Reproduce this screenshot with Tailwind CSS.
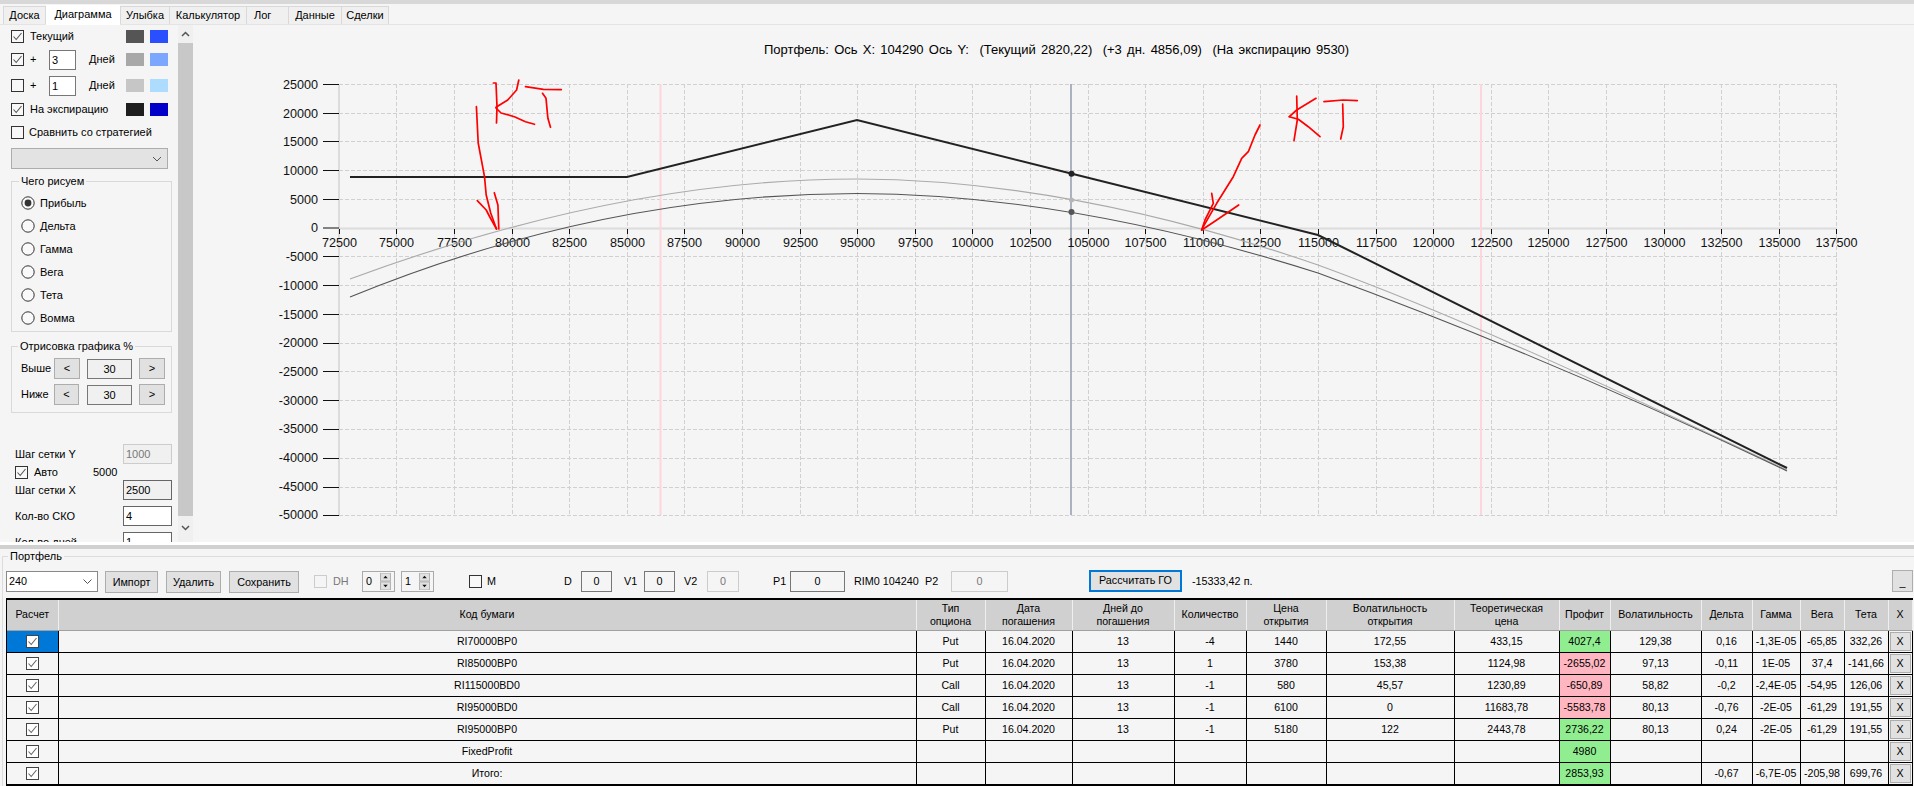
<!DOCTYPE html>
<html lang="ru"><head><meta charset="utf-8"><script src="https://cdn.jsdelivr.net/npm/@tailwindcss/browser@4"></script><title>Диаграмма</title></head>
<body class="m-0">
<svg class="hidden"><symbol id="on" viewBox="0 0 13 13"><rect x=".5" y=".5" width="12" height="12" fill="#fff" fill-opacity=".35" stroke="#333"/><path d="M2.5 6.5 5.2 9.5 10.5 3" fill="none" stroke="#555" stroke-width="1.1"/></symbol><symbol id="off" viewBox="0 0 13 13"><rect x=".5" y=".5" width="12" height="12" fill="#fff" fill-opacity=".35" stroke="#333"/></symbol><symbol id="cell" viewBox="0 0 13 13"><rect x=".5" y=".5" width="12" height="12" fill="#fff" stroke="#444"/><path d="M2.5 6.5 5.2 9.5 10.5 3" fill="none" stroke="#666" stroke-width="1.1"/></symbol><symbol id="rad" viewBox="0 0 14 14"><circle cx="7" cy="7" r="6.2" fill="#fff" fill-opacity=".4" stroke="#333"/></symbol><symbol id="radon" viewBox="0 0 14 14"><circle cx="7" cy="7" r="6.2" fill="#fff" fill-opacity=".4" stroke="#333"/><circle cx="7" cy="7" r="3.4" fill="#333"/></symbol><symbol id="spin" viewBox="0 0 11 19"><rect width="11" height="9" fill="#e1e1e1" stroke="#aaa"/><rect y="10" width="11" height="9" fill="#e1e1e1" stroke="#aaa"/><path d="M3 6 5.5 3 8 6ZM3 13 8 13 5.5 16Z" fill="#111"/></symbol></svg>
<div class="w-[1914px] h-[786px] overflow-hidden flex flex-col bg-[#f5f5f5] text-black text-[11px] font-['Liberation_Sans',Arial,sans-serif]">
  <div class="h-[4px] shrink-0 bg-[#d8d8d8]"></div>
  <div class="h-[21px] shrink-0 flex pl-[3px] items-end leading-[17px] border-b border-[#e4e4e4]">
    <div class="w-[43px] h-[18px] bg-[#f0f0f0] border border-b-0 border-[#d9d9d9] text-center">Доска</div>
    <div class="w-[74px] h-[20px] bg-white text-center leading-[19px] -mb-px">Диаграмма</div>
    <div class="w-[50px] h-[18px] bg-[#f0f0f0] border border-b-0 border-[#d9d9d9] text-center">Улыбка</div>
    <div class="w-[77px] h-[18px] bg-[#f0f0f0] border border-l-0 border-b-0 border-[#d9d9d9] text-center">Калькулятор</div>
    <div class="w-[42px] h-[18px] bg-[#f0f0f0] border border-l-0 border-b-0 border-[#d9d9d9] pl-[7px]">Лог</div>
    <div class="w-[53px] h-[18px] bg-[#f0f0f0] border border-l-0 border-b-0 border-[#d9d9d9] text-center">Данные</div>
    <div class="w-[47px] h-[18px] bg-[#f0f0f0] border border-l-0 border-b-0 border-[#d9d9d9] text-center">Сделки</div>
  </div>
  <div class="h-[517px] shrink-0 flex">
    <div class="w-[178px] shrink-0 overflow-hidden pl-[11px] pt-[5px]">
      <div class="h-[13px] mb-[10px] flex items-center"><svg class="w-[13px] h-[13px]"><use href="#on"/></svg><span class="ml-[6px] w-[96px]">Текущий</span><i class="w-[18px] h-[13px] bg-[#555]"></i><i class="ml-[6px] w-[18px] h-[13px] bg-[#2a4fff]"></i></div>
      <div class="h-[13px] mb-[13px] flex items-center"><svg class="w-[13px] h-[13px]"><use href="#on"/></svg><span class="ml-[6px] w-[19px]">+</span><span class="w-[27px] h-[20px] shrink-0 bg-white border border-[#777] pl-[2px] leading-[18px]">3</span><span class="ml-[13px] w-[37px]">Дней</span><i class="w-[18px] h-[13px] bg-[#a8a8a8]"></i><i class="ml-[6px] w-[18px] h-[13px] bg-[#7ba7ff]"></i></div>
      <div class="h-[13px] mb-[11px] flex items-center"><svg class="w-[13px] h-[13px]"><use href="#off"/></svg><span class="ml-[6px] w-[19px]">+</span><span class="w-[27px] h-[20px] shrink-0 bg-white border border-[#777] pl-[2px] leading-[18px]">1</span><span class="ml-[13px] w-[37px]">Дней</span><i class="w-[18px] h-[13px] bg-[#c6c6c6]"></i><i class="ml-[6px] w-[18px] h-[13px] bg-[#aedcff]"></i></div>
      <div class="h-[13px] mb-[10px] flex items-center"><svg class="w-[13px] h-[13px]"><use href="#on"/></svg><span class="ml-[6px] w-[96px]">На экспирацию</span><i class="w-[18px] h-[13px] bg-[#1e1e1e]"></i><i class="ml-[6px] w-[18px] h-[13px] bg-[#0000c8]"></i></div>
      <div class="h-[13px] mb-[9px] flex items-center"><svg class="w-[13px] h-[13px]"><use href="#off"/></svg><span class="ml-[5px]">Сравнить со стратегией</span></div>
      <div class="w-[157px] h-[21px] bg-[#e3e3e3] border border-[#adadad] flex items-center justify-end pr-[5px]"><svg class="w-[10px] h-[6px]" viewBox="0 0 10 6"><path d="M1 1 5 5 9 1" fill="none" stroke="#555"/></svg></div>
      <div class="relative mt-[12px] w-[161px] h-[151px] border border-[#d9d9d9] pl-[9px] pt-[14px]">
        <span class="absolute left-[7px] -top-[7px] px-[2px] bg-[#f5f5f5] leading-[13px]">Чего рисуем</span>
        <div class="h-[14px] mb-[9px] flex items-center gap-[5px]"><svg class="w-[14px] h-[14px]"><use href="#radon"/></svg>Прибыль</div>
        <div class="h-[14px] mb-[9px] flex items-center gap-[5px]"><svg class="w-[14px] h-[14px]"><use href="#rad"/></svg>Дельта</div>
        <div class="h-[14px] mb-[9px] flex items-center gap-[5px]"><svg class="w-[14px] h-[14px]"><use href="#rad"/></svg>Гамма</div>
        <div class="h-[14px] mb-[9px] flex items-center gap-[5px]"><svg class="w-[14px] h-[14px]"><use href="#rad"/></svg>Вега</div>
        <div class="h-[14px] mb-[9px] flex items-center gap-[5px]"><svg class="w-[14px] h-[14px]"><use href="#rad"/></svg>Тета</div>
        <div class="h-[14px] flex items-center gap-[5px]"><svg class="w-[14px] h-[14px]"><use href="#rad"/></svg>Вомма</div>
      </div>
      <div class="relative mt-[14px] w-[161px] h-[67px] border border-[#d9d9d9] pl-[9px] pt-[11px]">
        <span class="absolute left-[6px] -top-[7px] px-[2px] bg-[#f5f5f5] leading-[13px]">Отрисовка графика %</span>
        <div class="h-[21px] mb-[5px] flex items-center"><span class="w-[33px]">Выше</span><span class="w-[26px] h-[21px] bg-[#e1e1e1] border border-[#adadad] text-center leading-[19px]">&lt;</span><span class="ml-[7px] w-[45px] h-[20px] bg-[#f0f0f0] border border-[#777] text-center leading-[18px]">30</span><span class="ml-[7px] w-[26px] h-[21px] bg-[#e1e1e1] border border-[#adadad] text-center leading-[19px]">&gt;</span></div>
        <div class="h-[21px] flex items-center"><span class="w-[33px]">Ниже</span><span class="w-[25px] h-[21px] bg-[#e1e1e1] border border-[#adadad] text-center leading-[19px]">&lt;</span><span class="ml-[8px] w-[45px] h-[20px] bg-[#f0f0f0] border border-[#777] text-center leading-[18px]">30</span><span class="ml-[7px] w-[26px] h-[21px] bg-[#e1e1e1] border border-[#adadad] text-center leading-[19px]">&gt;</span></div>
      </div>
      <div class="pl-[4px] pt-[31px] w-[161px]">
        <div class="h-[20px] flex items-center justify-between"><span>Шаг сетки Y</span><span class="w-[49px] h-[20px] border border-[#ccc] bg-[#f0f0f0] text-[#777] pl-[2px] leading-[18px]">1000</span></div>
        <div class="h-[16px] flex items-center"><svg class="w-[13px] h-[13px]"><use href="#on"/></svg><span class="ml-[6px] w-[59px]">Авто</span><span>5000</span></div>
        <div class="h-[20px] flex items-center justify-between"><span>Шаг сетки X</span><span class="w-[49px] h-[20px] border border-[#666] bg-[#f0f0f0] pl-[2px] leading-[18px]">2500</span></div>
        <div class="h-[20px] mt-[6px] flex items-center justify-between"><span>Кол-во СКО</span><span class="w-[49px] h-[20px] border border-[#666] bg-white pl-[2px] leading-[18px]">4</span></div>
        <div class="h-[20px] mt-[6px] flex items-center justify-between"><span>Кол-во дней</span><span class="w-[49px] h-[20px] border border-[#666] bg-white pl-[2px] leading-[18px]">1</span></div>
      </div>
    </div>
    <div class="w-[15px] shrink-0 flex flex-col bg-[#f0f0f0]">
      <div class="h-[18px] flex items-center justify-center"><svg class="w-[9px] h-[6px]" viewBox="0 0 9 6"><path d="M1 5 4.5 1.5 8 5" fill="none" stroke="#555" stroke-width="1.5"/></svg></div>
      <div class="h-[473px] bg-[#c8c8c8]"></div>
      <div class="h-[24px] flex items-center justify-center"><svg class="w-[9px] h-[6px]" viewBox="0 0 9 6"><path d="M1 1 4.5 4.5 8 1" fill="none" stroke="#555" stroke-width="1.5"/></svg></div>
    </div>
    <svg class="w-[1721px] h-[517px] shrink-0 block" viewBox="193 25 1721 517" font-family="Liberation Sans, Arial, sans-serif" font-size="12.6">
      <text x="1056.6" y="53.5" text-anchor="middle" class="whitespace-pre" font-size="13" word-spacing="1.6">Портфель: Ось X: 104290 Ось Y:  (Текущий 2820,22)  (+3 дн. 4856,09)  (На экспирацию 9530)</text>
      <path stroke="#d0d0d0" stroke-dasharray="4 2" fill="none" d="M339 84.5H1837M339 113.5H1837M339 141.5H1837M339 170.5H1837M339 199.5H1837M339 256.5H1837M339 285.5H1837M339 314.5H1837M339 343.5H1837M339 371.5H1837M339 400.5H1837M339 429.5H1837M339 458.5H1837M339 487.5H1837M339 515.5H1837M396.5 84V515M454.5 84V515M512.5 84V515M569.5 84V515M627.5 84V515M684.5 84V515M742.5 84V515M800.5 84V515M857.5 84V515M915.5 84V515M972.5 84V515M1030.5 84V515M1088.5 84V515M1145.5 84V515M1203.5 84V515M1260.5 84V515M1318.5 84V515M1376.5 84V515M1433.5 84V515M1491.5 84V515M1548.5 84V515M1606.5 84V515M1664.5 84V515M1721.5 84V515M1779.5 84V515M1836.5 84V515"/>
      <path stroke="#dcdcdc" stroke-width="2" fill="none" d="M339 84V515M339 228.5H1837"/>
      <path stroke="#ffd5dc" stroke-width="2" fill="none" d="M660.5 84V515M1481 84V515"/>
      <path stroke="#98a2b3" stroke-width="1.6" fill="none" d="M1071 84V515"/>
      <path stroke="#111" fill="none" d="M323 84.5H339M323 113.5H339M323 141.5H339M323 170.5H339M323 199.5H339M323 228H339M323 256.5H339M323 285.5H339M323 314.5H339M323 343.5H339M323 371.5H339M323 400.5H339M323 429.5H339M323 458.5H339M323 487.5H339M323 515.5H339M339.5 229V234M396.5 229V234M454.5 229V234M512.5 229V234M569.5 229V234M627.5 229V234M684.5 229V234M742.5 229V234M800.5 229V234M857.5 229V234M915.5 229V234M972.5 229V234M1030.5 229V234M1088.5 229V234M1145.5 229V234M1203.5 229V234M1260.5 229V234M1318.5 229V234M1376.5 229V234M1433.5 229V234M1491.5 229V234M1548.5 229V234M1606.5 229V234M1664.5 229V234M1721.5 229V234M1779.5 229V234M1836.5 229V234"/>
      <g text-anchor="end" fill="#111">
        <text x="318" y="89">25000</text><text x="318" y="118">20000</text><text x="318" y="146">15000</text><text x="318" y="175">10000</text><text x="318" y="204">5000</text><text x="318" y="232">0</text><text x="318" y="261">-5000</text><text x="318" y="290">-10000</text><text x="318" y="319">-15000</text><text x="318" y="347">-20000</text><text x="318" y="376">-25000</text><text x="318" y="405">-30000</text><text x="318" y="433">-35000</text><text x="318" y="462">-40000</text><text x="318" y="491">-45000</text><text x="318" y="519">-50000</text>
      </g>
      <g text-anchor="middle" fill="#111">
        <text x="339.5" y="247">72500</text><text x="396.5" y="247">75000</text><text x="454.5" y="247">77500</text><text x="512.5" y="247">80000</text><text x="569.5" y="247">82500</text><text x="627.5" y="247">85000</text><text x="684.5" y="247">87500</text><text x="742.5" y="247">90000</text><text x="800.5" y="247">92500</text><text x="857.5" y="247">95000</text><text x="915.5" y="247">97500</text><text x="972.5" y="247">100000</text><text x="1030.5" y="247">102500</text><text x="1088.5" y="247">105000</text><text x="1145.5" y="247">107500</text><text x="1203.5" y="247">110000</text><text x="1260.5" y="247">112500</text><text x="1318.5" y="247">115000</text><text x="1376.5" y="247">117500</text><text x="1433.5" y="247">120000</text><text x="1491.5" y="247">122500</text><text x="1548.5" y="247">125000</text><text x="1606.5" y="247">127500</text><text x="1664.5" y="247">130000</text><text x="1721.5" y="247">132500</text><text x="1779.5" y="247">135000</text><text x="1836.5" y="247">137500</text>
      </g>
      <path fill="none" stroke="#aaa" stroke-width="1.1" d="M350 279C519 216.5 688 179 857 179C1011 179.5 1164 212 1318 265C1474 322 1630 397 1787 470"/>
      <path fill="none" stroke="#555" stroke-width="1.1" d="M350 297C519 228 688 193.5 857 193.5C1011 194 1164 224 1318 273C1474 330 1630 396 1787 471"/>
      <polyline fill="none" stroke="#222" stroke-width="2" points="350,177 627,177 857,120 1071,173.5 1318,235 1787,468"/>
      <circle cx="1071.5" cy="173.7" r="3" fill="#222"/><circle cx="1071.5" cy="200" r="2.5" fill="#b5b5b5"/><circle cx="1071.5" cy="212" r="3" fill="#555"/>
      <g fill="none" stroke="#f00" stroke-width="1.7" stroke-linecap="round" stroke-linejoin="round">
        <polyline points="476.4,106.7 478.2,143 484.5,176.7 486.2,195 490.7,213 496.5,229"/><polyline points="477.3,200.7 486.2,210 489.8,217 496.5,229"/><polyline points="494.3,192.7 497.9,205 498.8,229"/>
        <polyline points="493.4,83 496,83 497,106.7 496.5,123"/><polyline points="518.8,80 516.6,90 507.7,100 496,107.3"/><polyline points="496,108 501,113 514.4,116.7 525.5,121.7 534.5,124.3"/><polyline points="525.5,86.7 543.4,89.3 561.3,89.7"/><polyline points="542.5,93.3 546,98.3 547.9,118.3 550.5,127.3"/>
        <polyline points="1260,125 1255,135 1248.3,151.7 1241.7,158.3 1233.3,176.7 1216.7,203.3 1203.3,226.7 1201.7,230"/><polyline points="1211.7,193.3 1213.3,203.3 1205,220 1201.7,230"/><polyline points="1201.7,230 1216.7,220 1238.7,205"/>
        <polyline points="1296.7,96 1297.3,120 1294,140.7"/><polyline points="1316,98.3 1296.7,110 1289.3,116.7"/><polyline points="1289.3,116.7 1298.3,119.3 1308.3,126.7 1320,136.7"/><polyline points="1324,101.7 1343.3,100 1357.3,100.7"/><polyline points="1342.7,104 1343.3,126.7 1340.7,139"/>
      </g>
    </svg>
  </div>
  <div class="h-[3px] shrink-0 bg-white"></div>
  <div class="h-[4px] shrink-0 bg-[#d0d0d0]"></div>
  <div class="relative flex-1 mt-[7px] ml-[2px] border-t border-l border-[#dcdcdc]">
    <span class="absolute left-[5px] -top-[7px] px-[2px] bg-[#f5f5f5] leading-[13px]">Портфель</span>
    <div class="h-[23px] mt-[13px] ml-[3px] flex items-center text-[10.8px]">
      <div class="w-[92px] h-[21px] bg-white border border-[#888] flex items-center justify-between pl-[2px] pr-[5px]">240<svg class="w-[9px] h-[5px]" viewBox="0 0 9 5"><path d="M.5.5 4.5 4.5 8.5.5" fill="none" stroke="#555"/></svg></div>
      <span class="ml-[7px] w-[53px] h-[22px] bg-[#e1e1e1] border border-[#adadad] text-center leading-[20px]">Импорт</span>
      <span class="ml-[8px] w-[55px] h-[22px] bg-[#e1e1e1] border border-[#adadad] text-center leading-[20px]">Удалить</span>
      <span class="ml-[8px] w-[70px] h-[22px] bg-[#e1e1e1] border border-[#adadad] text-center leading-[20px]">Сохранить</span>
      <span class="ml-[15px] w-[13px] h-[13px] border border-[#ccc]"></span>
      <span class="ml-[6px] w-[29px] text-[#777]">DH</span>
      <div class="w-[33px] h-[21px] border border-[#aaa] flex items-center justify-between pl-[3px] pr-[3px]">0<svg class="w-[11px] h-[17px]"><use href="#spin"/></svg></div>
      <div class="ml-[6px] w-[33px] h-[21px] border border-[#aaa] flex items-center justify-between pl-[3px] pr-[3px]">1<svg class="w-[11px] h-[17px]"><use href="#spin"/></svg></div>
      <svg class="ml-[35px] w-[13px] h-[13px]"><use href="#off"/></svg>
      <span class="ml-[5px] w-[77px]">M</span>
      <span class="w-[17px]">D</span>
      <span class="w-[31px] h-[21px] border border-[#777] text-center leading-[19px]">0</span>
      <span class="ml-[12px] w-[20px]">V1</span>
      <span class="w-[31px] h-[21px] border border-[#777] text-center leading-[19px]">0</span>
      <span class="ml-[9px] w-[23px]">V2</span>
      <span class="w-[32px] h-[21px] border border-[#ccc] text-[#777] text-center leading-[19px]">0</span>
      <span class="ml-[34px] w-[17px]">P1</span>
      <span class="w-[55px] h-[21px] border border-[#777] text-center leading-[19px]">0</span>
      <span class="ml-[9px] w-[71px] whitespace-nowrap">RIM0 104240</span>
      <span class="w-[26px]">P2</span>
      <span class="w-[57px] h-[21px] border border-[#ccc] text-[#777] text-center leading-[19px]">0</span>
      <span class="ml-[81px] w-[93px] h-[22px] -mt-[2px] bg-[#e1e1e1] border-2 border-[#0078d7] text-center leading-[17px]">Рассчитать ГО</span>
      <span class="ml-[10px] w-[60px] whitespace-nowrap">-15333,42 п.</span>
      <span class="ml-[640px] w-[21px] h-[22px] -mt-[2px] bg-[#e1e1e1] border border-[#adadad] text-center leading-[22px]">_</span>
    </div>
    <div class="mt-[5px] ml-[3px] w-[1907px] border border-t-2 border-black text-[10.6px] leading-[13px]">
      <table class="table-fixed w-[1905px] border-collapse text-center [&_th]:font-normal [&_th]:p-0 [&_td]:p-0 [&_th]:h-[30px] [&_td]:h-[22px] [&_th]:bg-[#d0d0d0] [&_th]:border-r [&_th]:border-r-[#efefef] [&_th]:border-b [&_th]:border-b-[#a0a0a0] [&_td]:border-r [&_td]:border-b [&_td]:border-black">
        <colgroup><col class="w-[51px]"><col class="w-[858px]"><col class="w-[69px]"><col class="w-[87px]"><col class="w-[102px]"><col class="w-[72px]"><col class="w-[80px]"><col class="w-[128px]"><col class="w-[105px]"><col class="w-[51px]"><col class="w-[91px]"><col class="w-[51px]"><col class="w-[48px]"><col class="w-[44px]"><col class="w-[44px]"><col class="w-[24px]"></colgroup>
        <thead><tr><th>Расчет</th><th>Код бумаги</th><th>Тип<br>опциона</th><th>Дата<br>погашения</th><th>Дней до<br>погашения</th><th>Количество</th><th>Цена<br>открытия</th><th>Волатильность<br>открытия</th><th>Теоретическая<br>цена</th><th>Профит</th><th>Волатильность</th><th>Дельта</th><th>Гамма</th><th>Вега</th><th>Тета</th><th>X</th></tr></thead>
        <tbody>
          <tr><td class="bg-[#0078d7]"><svg class="w-[13px] h-[13px] mx-auto block"><use href="#cell"/></svg></td><td>RI70000BP0</td><td>Put</td><td>16.04.2020</td><td>13</td><td>-4</td><td>1440</td><td>172,55</td><td>433,15</td><td class="bg-[#90ee90]">4027,4</td><td>129,38</td><td>0,16</td><td>-1,3E-05</td><td>-65,85</td><td>332,26</td><td><div class="h-[19px] mx-px bg-[#e1e1e1] border border-[#adadad] leading-[17px]">X</div></td></tr>
          <tr><td><svg class="w-[13px] h-[13px] mx-auto block"><use href="#cell"/></svg></td><td>RI85000BP0</td><td>Put</td><td>16.04.2020</td><td>13</td><td>1</td><td>3780</td><td>153,38</td><td>1124,98</td><td class="bg-[#ffb6c1]">-2655,02</td><td>97,13</td><td>-0,11</td><td>1E-05</td><td>37,4</td><td>-141,66</td><td><div class="h-[19px] mx-px bg-[#e1e1e1] border border-[#adadad] leading-[17px]">X</div></td></tr>
          <tr><td><svg class="w-[13px] h-[13px] mx-auto block"><use href="#cell"/></svg></td><td>RI115000BD0</td><td>Call</td><td>16.04.2020</td><td>13</td><td>-1</td><td>580</td><td>45,57</td><td>1230,89</td><td class="bg-[#ffb6c1]">-650,89</td><td>58,82</td><td>-0,2</td><td>-2,4E-05</td><td>-54,95</td><td>126,06</td><td><div class="h-[19px] mx-px bg-[#e1e1e1] border border-[#adadad] leading-[17px]">X</div></td></tr>
          <tr><td><svg class="w-[13px] h-[13px] mx-auto block"><use href="#cell"/></svg></td><td>RI95000BD0</td><td>Call</td><td>16.04.2020</td><td>13</td><td>-1</td><td>6100</td><td>0</td><td>11683,78</td><td class="bg-[#ffb6c1]">-5583,78</td><td>80,13</td><td>-0,76</td><td>-2E-05</td><td>-61,29</td><td>191,55</td><td><div class="h-[19px] mx-px bg-[#e1e1e1] border border-[#adadad] leading-[17px]">X</div></td></tr>
          <tr><td><svg class="w-[13px] h-[13px] mx-auto block"><use href="#cell"/></svg></td><td>RI95000BP0</td><td>Put</td><td>16.04.2020</td><td>13</td><td>-1</td><td>5180</td><td>122</td><td>2443,78</td><td class="bg-[#90ee90]">2736,22</td><td>80,13</td><td>0,24</td><td>-2E-05</td><td>-61,29</td><td>191,55</td><td><div class="h-[19px] mx-px bg-[#e1e1e1] border border-[#adadad] leading-[17px]">X</div></td></tr>
          <tr><td><svg class="w-[13px] h-[13px] mx-auto block"><use href="#cell"/></svg></td><td>FixedProfit</td><td></td><td></td><td></td><td></td><td></td><td></td><td></td><td class="bg-[#90ee90]">4980</td><td></td><td></td><td></td><td></td><td></td><td><div class="h-[19px] mx-px bg-[#e1e1e1] border border-[#adadad] leading-[17px]">X</div></td></tr>
          <tr><td><svg class="w-[13px] h-[13px] mx-auto block"><use href="#cell"/></svg></td><td>Итого:</td><td></td><td></td><td></td><td></td><td></td><td></td><td></td><td class="bg-[#90ee90]">2853,93</td><td></td><td>-0,67</td><td>-6,7E-05</td><td>-205,98</td><td>699,76</td><td><div class="h-[19px] mx-px bg-[#e1e1e1] border border-[#adadad] leading-[17px]">X</div></td></tr>
        </tbody>
      </table>
    </div>
  </div>
</div>
</body></html>
